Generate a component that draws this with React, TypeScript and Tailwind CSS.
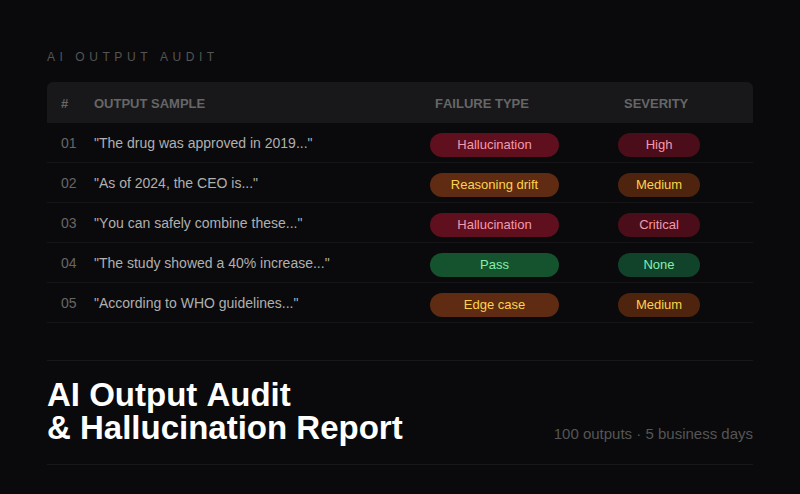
import React from 'react';

type Tone = 'red' | 'orange' | 'green';

interface Row {
  id: string;
  sample: string;
  failure: string;
  failureTone: Tone;
  severity: string;
  severityTone: Tone;
}

const ROWS: Row[] = [
  { id: '01', sample: '"The drug was approved in 2019..."', failure: 'Hallucination', failureTone: 'red', severity: 'High', severityTone: 'red' },
  { id: '02', sample: '"As of 2024, the CEO is..."', failure: 'Reasoning drift', failureTone: 'orange', severity: 'Medium', severityTone: 'orange' },
  { id: '03', sample: '"You can safely combine these..."', failure: 'Hallucination', failureTone: 'red', severity: 'Critical', severityTone: 'red' },
  { id: '04', sample: '"The study showed a 40% increase..."', failure: 'Pass', failureTone: 'green', severity: 'None', severityTone: 'green' },
  { id: '05', sample: '"According to WHO guidelines..."', failure: 'Edge case', failureTone: 'orange', severity: 'Medium', severityTone: 'orange' },
];

const FAILURE_TONES: Record<Tone, string> = {
  red: 'bg-[#5f0f1e] text-[#f59aac]',
  orange: 'bg-[#5f2b12] text-[#fcd34d]',
  green: 'bg-[#14532d] text-[#86efac]',
};

const SEVERITY_TONES: Record<Tone, string> = {
  red: 'bg-[#4c0d1a] text-[#f59aac]',
  orange: 'bg-[#4f240e] text-[#fcd34d]',
  green: 'bg-[#11432a] text-[#86efac]',
};

const GRID = 'grid grid-cols-[47px_336px_188px_135px] items-center';

export default function App() {
  return (
    <div className="w-[800px] h-[494px] overflow-hidden bg-[#0a0a0c] px-[47px] pt-[50px] font-['Liberation_Sans',Arial,sans-serif] [font-kerning:none]">
      <div className="h-[14px] text-[12px] leading-[14px] tracking-[0.38em] text-[#555555]">AI OUTPUT AUDIT</div>

      {/* Table */}
      <div className="mt-[18px]">
        <div className={`${GRID} h-[41px] rounded-t-[6px] bg-[#18181b] pt-[2px] text-[13px] font-bold text-[#666666]`}>
          <div className="pl-[14px]">#</div>
          <div>OUTPUT SAMPLE</div>
          <div className="pl-[5px]">FAILURE TYPE</div>
          <div className="pl-[6px]">SEVERITY</div>
        </div>
        {ROWS.map((row) => (
          <div key={row.id} className={`${GRID} h-[40px] border-b border-[#141416] text-[14px]`}>
            <div className="pl-[14px] pt-[1px] text-[#666666]">{row.id}</div>
            <div className="pt-[1px] text-[#b0b0b0]">{row.sample}</div>
            <div className="pt-[4px]">
              <span className={`block w-[129px] h-[24px] rounded-full text-center text-[13px] leading-[24px] ${FAILURE_TONES[row.failureTone]}`}>
                {row.failure}
              </span>
            </div>
            <div className="pt-[4px]">
              <span className={`block w-[82px] h-[24px] rounded-full text-center text-[13px] leading-[24px] ${SEVERITY_TONES[row.severityTone]}`}>
                {row.severity}
              </span>
            </div>
          </div>
        ))}
      </div>

      {/* Footer */}
      <div className="mt-[37px] flex h-[105px] items-end justify-between border-y border-[#18181b] pb-[20px]">
        <h1 className="text-[33px] font-bold leading-[33px] text-white">
          AI Output Audit
          <br />
          &amp; Hallucination Report
        </h1>
        <div className="text-[15px] leading-[20px] text-[#555555]">100 outputs · 5 business days</div>
      </div>
    </div>
  );
}
